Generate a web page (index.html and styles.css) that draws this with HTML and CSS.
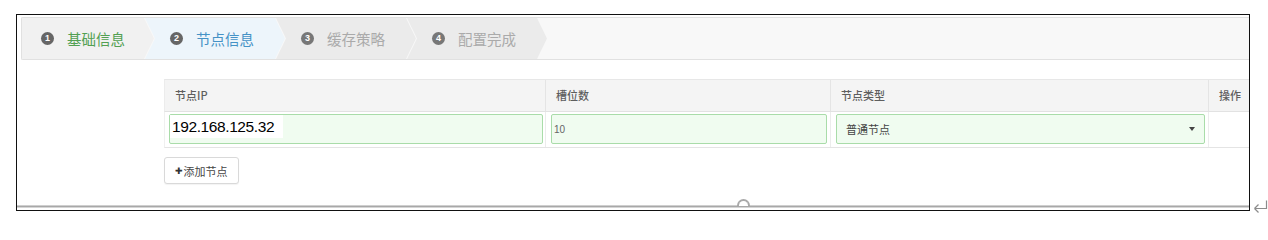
FILE: index.html
```html
<!DOCTYPE html>
<html lang="zh">
<head>
<meta charset="utf-8">
<title>节点信息</title>
<link rel="stylesheet" href="styles.css">
</head>
<body>
<div class="page">
  <div class="frame">
    <div class="steps">
      <div class="step step-first done"><span class="num">1</span><span class="label">基础信息</span></div>
      <div class="step active"><span class="num">2</span><span class="label">节点信息</span></div>
      <div class="step todo"><span class="num">3</span><span class="label">缓存策略</span></div>
      <div class="step todo"><span class="num">4</span><span class="label">配置完成</span></div>
    </div>
    <div class="grid">
      <div class="thead">
        <div class="th">节点IP</div>
        <div class="th">槽位数</div>
        <div class="th">节点类型</div>
        <div class="th">操作</div>
      </div>
      <div class="trow">
        <div class="td"><div class="inp"><span class="paste">192.168.125.32</span></div></div>
        <div class="td"><div class="inp"><span class="small">10</span></div></div>
        <div class="td"><div class="inp sel"><span class="seltext">普通节点</span><span class="caret"></span></div></div>
        <div class="td"></div>
      </div>
    </div>
    <button class="add"><span class="plus">✚</span>添加节点</button>
    <div class="rule"><span class="handle"></span></div>
  </div>
  <svg class="ret" width="15" height="13" viewBox="0 0 15 13">
    <path d="M13.5 0.5 V8.5 H1.5 M1.5 8.5 L5.5 4.5 M1.5 8.5 L5.5 12.5" fill="none" stroke="#8c8c8c" stroke-width="1.2"/>
  </svg>
</div>
</body>
</html>
```

FILE: styles.css
```css
body {
  margin: 0;
  background: #fff;
  font-family: "Noto Sans CJK SC", "Liberation Sans", sans-serif;
}
.page {
  display: flex;
  align-items: flex-start;
  padding: 14px 0 0 16px;
  height: 224px;
  box-sizing: border-box;
}
.frame {
  width: 1234px;
  height: 197px;
  box-sizing: border-box;
  border: 1px solid #111;
  overflow: hidden;
  display: flex;
  flex-direction: column;
  flex: none;
}
.steps {
  margin: 2px 0 0 4px;
  height: 43px;
  box-sizing: border-box;
  border: 1px solid #e1e1e1;
  border-right: none;
  border-radius: 2px 0 0 2px;
  background: #f8f8f8;
  display: flex;
  flex: none;
}
.step {
  width: 140px;
  flex: none;
  margin-left: -9px;
  padding-left: 25px;
  box-sizing: border-box;
  display: flex;
  align-items: center;
  clip-path: polygon(0 0, 130px 0, 140px 50%, 130px 100%, 0 100%, 10px 50%);
  background: #ebebeb;
}
.step-first {
  width: 132px;
  margin-left: 0;
  padding-left: 19px;
  clip-path: polygon(0 0, 122px 0, 132px 50%, 122px 100%, 0 100%);
  background: #f1f1f1;
}
.step.active { background: #edf5fb; }
.num {
  width: 13px;
  height: 13px;
  border-radius: 50%;
  background: #666;
  color: #fff;
  font: bold 9px/13px "Liberation Sans", sans-serif;
  text-align: center;
  flex: none;
}
.todo .num { background: #777; }
.label {
  margin-left: 13px;
  font-size: 14.5px;
  line-height: 20px;
  color: #aaa;
}
.done .label { color: #52a052; }
.active .label { color: #4592c6; }

.grid {
  margin: 19px 0 0 147px;
  width: 1100px;
  flex: none;
}
.thead, .trow {
  display: grid;
  grid-template-columns: 380px 285px 378px 57px;
}
.thead {
  height: 33px;
  box-sizing: border-box;
  background: #f4f4f4;
  border-top: 1px solid #e7e7e7;
  border-bottom: 1px solid #e2e2e2;
  border-left: 1px solid #ececec;
}
.th {
  padding-left: 10px;
  font-size: 11px;
  font-weight: 500;
  color: #5e5e5e;
  line-height: 31px;
  border-left: 1px solid #e4e4e4;
}
.th:first-child { border-left: none; }
.trow {
  height: 36px;
  box-sizing: border-box;
  border-bottom: 1px solid #e4e4e4;
  border-left: 1px solid #f0f0f0;
}
.td {
  padding: 2px 3px 0 5px;
  border-left: 1px solid #ececec;
}
.td:first-child { border-left: none; padding-left: 4px; padding-right: 2px; }
.inp {
  height: 30px;
  box-sizing: border-box;
  border: 1px solid #a9dca9;
  border-radius: 2px;
  background: #f0fcf0;
  display: flex;
  align-items: center;
}
.paste {
  align-self: flex-start;
  width: 113px;
  height: 23px;
  box-sizing: border-box;
  padding-left: 2px;
  background: #fff;
  font-family: "Liberation Sans", Arial, sans-serif;
  font-size: 15.5px;
  letter-spacing: -0.4px;
  line-height: 23px;
  color: #000;
}
.small {
  padding-left: 2px;
  font-family: "Liberation Sans", Arial, sans-serif;
  font-size: 10px;
  color: #666;
}
.sel {
  justify-content: space-between;
  padding: 0 9px 0 9px;
}
.seltext {
  font-size: 11px;
  color: #444;
}
.caret {
  width: 0;
  height: 0;
  border-left: 3px solid transparent;
  border-right: 3px solid transparent;
  border-top: 4px solid #444;
}
.add {
  margin: 9px 0 0 147px;
  width: 75px;
  height: 27px;
  box-sizing: border-box;
  border: 1px solid #d9d9d9;
  border-radius: 3px;
  background: #fff;
  box-shadow: 0 1px 1px rgba(0,0,0,0.05);
  padding: 0 0 0 10px;
  display: flex;
  align-items: center;
  font-family: "Noto Sans CJK SC", sans-serif;
  font-size: 11px;
  color: #444;
  flex: none;
}
.plus {
  font-family: "DejaVu Sans", sans-serif;
  font-size: 9px;
  color: #333;
  margin-right: 1px;
}
.rule {
  position: relative;
  margin-top: auto;
  margin-bottom: 2px;
  height: 3px;
  box-sizing: border-box;
  border-top: 1px solid #cfcfcf;
  border-bottom: 1px solid #d6d6d6;
  background: #a8a8a8;
  flex: none;
}
.handle {
  position: absolute;
  left: 720px;
  top: -7px;
  width: 13px;
  height: 7px;
  box-sizing: border-box;
  border: 2px solid #a9a9a9;
  border-bottom: none;
  border-radius: 7px 7px 0 0;
  background: #fff;
}
.ret {
  flex: none;
  margin: 186px 0 0 3px;
}
```
